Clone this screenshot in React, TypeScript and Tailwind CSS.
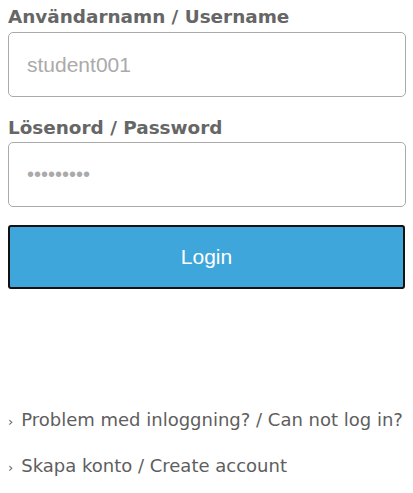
export default function App() {
  return (
    <div className="w-[413px] h-[493px] bg-white px-2 font-['DejaVu_Sans',sans-serif]">
      <label className="block pt-[6px] text-[18.4px] leading-[22px] font-bold text-[#666]">
        Användarnamn / Username
      </label>
      <input
        type="text"
        placeholder="student001"
        className="mt-[4px] block w-[398px] h-[65px] rounded-[5px] border border-[#aaa] px-[18px] text-[21px] font-['Liberation_Sans',sans-serif] placeholder:text-[#aaa] outline-none"
      />
      <label className="block mt-[20px] text-[18.4px] leading-[22px] font-bold text-[#666]">
        Lösenord / Password
      </label>
      <input
        type="password"
        defaultValue="student01"
        className="mt-[3px] block w-[398px] h-[65px] rounded-[5px] border border-[#aaa] px-[18px] text-[20px] text-[#aaa] font-['Liberation_Sans',sans-serif] outline-none"
      />
      <button className="mt-[18px] block w-[397px] h-[64px] rounded-[3px] border-2 border-[#111] bg-[#3ea6da] text-white text-[21px] font-['Liberation_Sans',sans-serif]">
        Login
      </button>
      <div className="mt-[119px] flex flex-col gap-[21px] text-[18px] leading-[23px] text-[#5e5e5e] whitespace-nowrap">
        <a className="block">
          <span className="text-[13px] mr-[8px]">›</span>Problem med inloggning? / Can not log in?
        </a>
        <a className="block">
          <span className="text-[13px] mr-[8px]">›</span>Skapa konto / Create account
        </a>
      </div>
    </div>
  );
}
